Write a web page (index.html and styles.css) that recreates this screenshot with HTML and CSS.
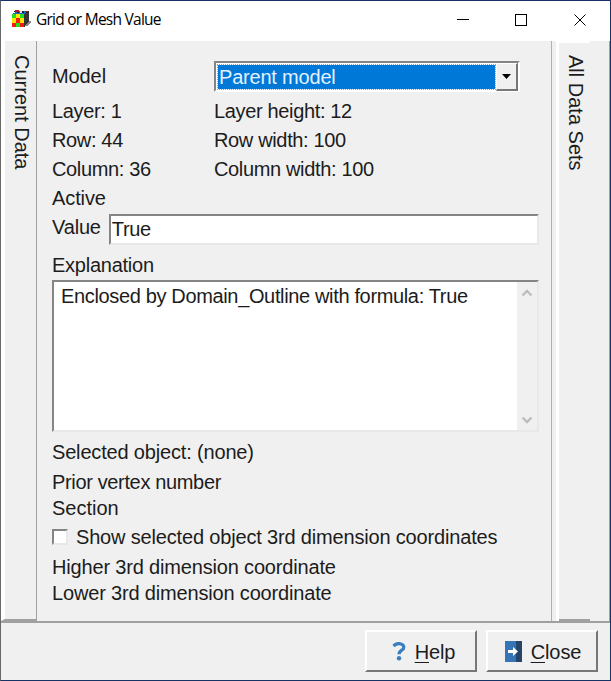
FILE: index.html
```html
<!DOCTYPE html>
<html lang="en">
<head>
<meta charset="utf-8">
<title>Grid or Mesh Value</title>
<link rel="stylesheet" href="styles.css">
</head>
<body>
<div class="window">
  <header class="titlebar">
    <svg class="app-icon" width="20" height="18" viewBox="0 0 20 18" shape-rendering="crispEdges">
      <path d="M2 1h15v12l-5 4H9z" fill="#222"/>
      <path d="M1 3h2V1h2v2h2V1h2v2h3V1h2v2l-2 2H1z" fill="#2465c9"/>
      <path d="M8 1h2v2H8z" fill="#ddd"/><path d="M3 0h4v2H3zM13 1h3v1h-3z" fill="#b21825"/>
      <path d="M0 4h12v13H0z" fill="#f21c13"/>
      <path d="M0 4h4v4H0zM8 4h4v4H8zM4 13h4v4H4z" fill="#20e020"/>
      <path d="M4 4h4v4H4zM0 8h4v5H0zM8 8h4v5H8z" fill="#ffe500"/>
      <path d="M12 4l5-2v10l-5 5z" fill="#343434"/>
      <path d="M13 15l5-4 1 1-4 4h-2z" fill="#888"/>
    </svg>
    <h1>Grid or Mesh Value</h1>
    <svg class="controls" width="130" height="12" viewBox="0 0 130 12" fill="none" stroke="#000">
      <path d="M0 5.500h12M58.500 .5h11v11h-11z" shape-rendering="crispEdges"/><path d="M117.500 .5l11 11m0-11l-11 11"/>
    </svg>
  </header>
  <div class="workspace">
    <aside class="tab left"><span>Current Data</span></aside>
    <main>
      <div class="row model"><span class="t label">Model</span>
        <div class="combo"><div class="selected"><span class="t">Parent model</span></div><div class="drop"><svg width="9" height="5" viewBox="0 0 9 5"><path d="M0 0h9L4.500 5z"/></svg></div></div>
      </div>
      <div class="dims">
        <span class="t">Layer: 1</span><span class="t">Layer height: 12</span>
        <span class="t">Row: 44</span><span class="t">Row width: 100</span>
        <span class="t">Column: 36</span><span class="t">Column width: 100</span>
        <span class="t active">Active</span>
      </div>
      <div class="row value"><span class="t loose">Value</span><div class="field sunken"><span class="t">True</span></div></div>
      <div class="t explanation">Explanation</div>
      <div class="memo sunken"><span class="t">Enclosed by Domain_Outline with formula: True</span>
        <div class="scroll"><svg width="12" height="8" viewBox="0 0 12 8"><path d="M1.500 6.500L6 2l4.500 4.500"/></svg><svg width="12" height="8" viewBox="0 0 12 8"><path d="M1.500 1.500L6 6l4.500-4.500"/></svg></div>
      </div>
      <div class="t object loose">Selected object: (none)</div>
      <div class="t vertex">Prior vertex number</div>
      <div class="t section">Section</div>
      <div class="row check"><i class="box"></i><span class="t loose">Show selected object 3rd dimension coordinates</span></div>
      <div class="t higher loose">Higher 3rd dimension coordinate</div>
      <div class="t lower loose">Lower 3rd dimension coordinate</div>
    </main>
    <aside class="tab right"><span>All Data Sets</span></aside>
  </div>
  <footer>
    <div class="button help"><svg width="14" height="19" viewBox="0 0 14 19"><path d="M1.500 4C4 1.500 7 1.300 9 2c3.500 1 3.500 4.500 1 6-2 1.400-3 2-3 4.300" fill="none" stroke="#3c7ebd" stroke-width="3.200"/><circle cx="7" cy="16.300" r="2.200" fill="#3c7ebd"/></svg><span class="t"><u>H</u>elp</span></div>
    <div class="button close"><svg width="17" height="21" viewBox="0 0 17 21"><path d="M0 0h17v21H0z" fill="#3575b5"/><path d="M11 0h6v21h-6z" fill="#244568"/><path d="M3 9h5V6l5 4.500L8 15v-3H3z" fill="#fff"/></svg><span class="t"><u>C</u>lose</span></div>
  </footer>
</div>
</body>
</html>
```
FILE: styles.css
```css
* { box-sizing: border-box; }
body { margin: 0; background: #f0f0f0; color: #1c1c1c; font: 20px/24px "Liberation Sans", Arial, sans-serif; overflow: hidden; }
.window { width: 611px; height: 681px; border: 1px solid #173365; border-left-color: #686868; background: #f0f0f0; }
.titlebar { height: 40px; background: #fff; display: flex; align-items: flex-start; padding: 8px 0 0 11px; }
.app-icon { margin-top: 1px; flex: none; }
h1 { margin: -2px 0 0 4px; font: 15.5px/24px "Open Sans", sans-serif; letter-spacing: -.75px; color: #000; white-space: nowrap; flex: none; }
.controls { margin: 5px 23px 0 auto; flex: none; }
.t { white-space: nowrap; letter-spacing: -.35px; }
.loose { letter-spacing: -.17px; }
.workspace { height: 582px; display: flex; border-bottom: 2px solid #a0a0a0; }
.tab { flex: none; }
.tab span { display: block; writing-mode: vertical-rl; white-space: nowrap; line-height: 24px; }
.left { width: 36px; border-left: 4px solid #fff; border-right: 1px solid #a0a0a0; border-bottom: 2px solid #a0a0a0; padding: 14px 0 0 5px; }
.right { width: 54px; border-left: 3px solid #fff; border-right: 1px solid #a0a0a0; padding: 14px 0 0 5px; background: linear-gradient(#fff, #fff) 0 0 / 31px 2px no-repeat, linear-gradient(#a0a0a0, #a0a0a0) 0 100% / 31px 2px no-repeat; }
main { width: 515px; border-right: 1px solid #b0b0b0; padding: 20px 12px 0 15px; margin-right: 4px; }
.row { display: flex; }
.model { height: 36px; }
.label { width: 162px; margin-top: 3px; letter-spacing: -.1px; }
.combo { width: 306px; height: 31px; border: 2px solid #858585; border-right-color: #fff; border-bottom-color: #fff; display: flex; background: #fff; }
.selected { width: 280px; height: 26px; margin: 1px 0 0 1px; border: 1px dotted #ff8728; background: #0078d7 padding-box; background-color: #0078d7; color: #e3f1ff; padding-left: 1px; }
.selected .t { letter-spacing: -.2px; }
.drop { width: 22px; height: 28px; border: 1px solid #fff; border-right: 2px solid #777; border-bottom: 2px solid #777; background: #f0f0f0; display: flex; align-items: center; justify-content: center; }
.dims { display: grid; grid-template-columns: 162px 1fr; grid-auto-rows: 29px; padding-top: 2px; }
.active { letter-spacing: -.1px; }
.value { height: 33px; }
.field { width: 430px; height: 31px; margin: -1px 0 0 8px; padding: 1px 0 0 1px; }
.sunken { background: #fff; border: 2px solid #858585; border-right-color: #e8e8e8; border-bottom-color: #e8e8e8; }
.explanation { height: 32px; padding-top: 5px; letter-spacing: -.25px; }
.memo { width: 487px; height: 152px; display: flex; padding-left: 7px; }
.memo .t { padding-top: 2px; }
.scroll { margin-left: auto; width: 20px; height: 148px; background: #f0f0f0; display: flex; flex-direction: column; align-items: center; justify-content: space-between; padding: 7px 0 6px; }
.scroll path { fill: none; stroke: #bdbdbd; stroke-width: 2.4; }
.object { height: 30px; margin-top: 8px; }
.vertex { height: 26px; }
.section { height: 29px; letter-spacing: 0; }
.check { height: 30px; }
.box { width: 16px; height: 16px; margin: 4px 8px 0 0; background: #fff; border: 2px solid #858585; border-right-color: #e8e8e8; border-bottom-color: #e8e8e8; }
.higher { height: 26px; }
footer { height: 57px; display: flex; gap: 9px; padding: 7px 12px 0 0; justify-content: flex-end; }
.button { width: 112px; height: 42px; border: 2px solid #fff; border-right: 2px solid #777; border-bottom: 2px solid #777; display: flex; align-items: center; justify-content: center; gap: 9px; }
.button svg { flex: none; }
.button .t { letter-spacing: -.1px; margin-top: 1px; }
.help { padding-left: 5px; }
.close { padding-left: 2px; }
u { text-decoration-thickness: 1px; text-underline-offset: 3px; }
```
